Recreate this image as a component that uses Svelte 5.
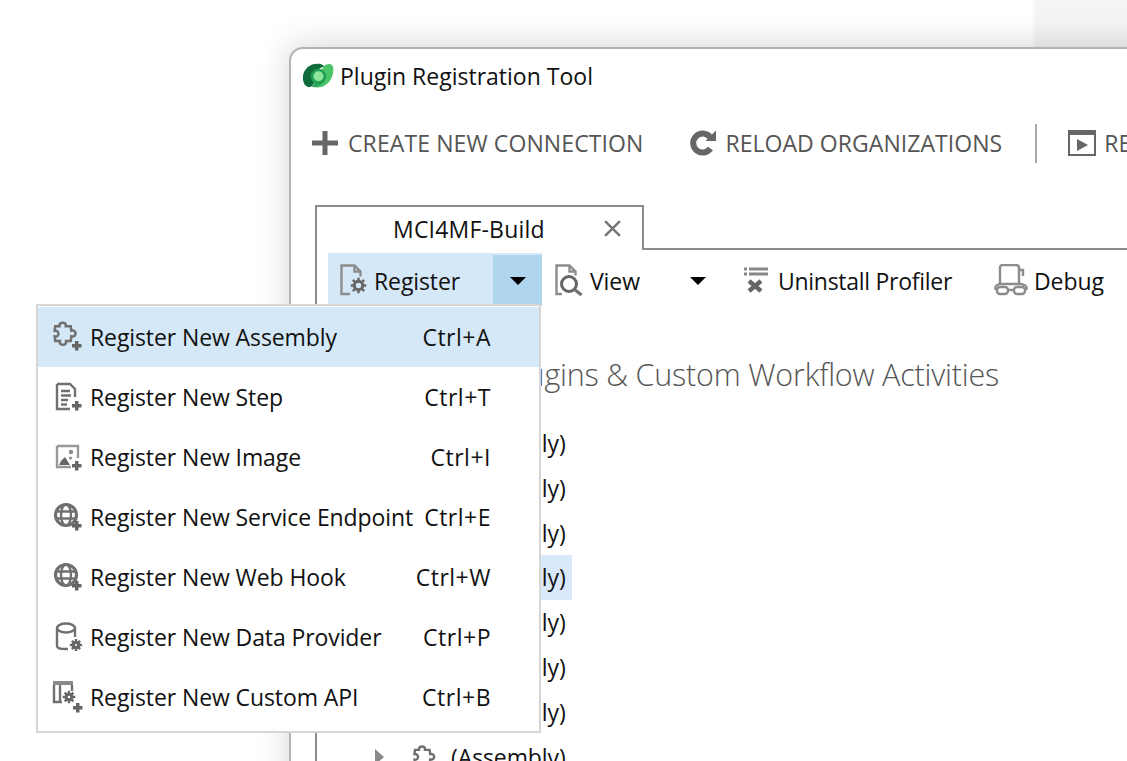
<script>
  const treeRows = [0, 1, 2, 3, 4, 5, 6, 7];

  const menuItems = [
    { label: "Register New Assembly", key: "Ctrl+A", icon: "assembly", active: true },
    { label: "Register New Step", key: "Ctrl+T", icon: "step" },
    { label: "Register New Image", key: "Ctrl+I", icon: "image" },
    { label: "Register New Service Endpoint", key: "Ctrl+E", icon: "globe" },
    { label: "Register New Web Hook", key: "Ctrl+W", icon: "globe" },
    { label: "Register New Data Provider", key: "Ctrl+P", icon: "data" },
    { label: "Register New Custom API", key: "Ctrl+B", icon: "api" }
  ];

  const puzzle = "M11 2.500c2.200 0 3.300 1.200 3 3.400h4.600l.6 4.200c2.400-.6 3.900.6 3.900 2.700s-1.600 3.200-3.900 2.600l-.6 4.400h-4.400c.4 2.400-.8 3.600-2.900 3.600s-3.300-1.300-2.900-3.600H4l-.5-4.200c2.200.4 3.500-.7 3.500-2.600S5.700 9.800 3.500 10.100L4 5.900h4c-.3-2.200.8-3.400 3-3.400z";
</script>

{#snippet plusBadge(x, y)}
  <path class="solid" d="M{x + 3} {y}h3.500v3h3v3.500h-3v3h-3.500v-3h-3v-3.500h3z" />
{/snippet}

{#snippet gear(x, y, r = 3.4)}
  <circle class="ring" cx={x} cy={y} r={r} stroke-width="3" />
  <path class="teeth" d="M{x} {y - r - 3.500}v3M{x} {y + r + .5}v3M{x - r - 3.500} {y}h3M{x + r + .5} {y}h3M{x - r - 1.500} {y - r - 1.500}l2.200 2.200M{x + r + 1.500} {y - r - 1.500}l-2.200 2.200M{x - r - 1.500} {y + r + 1.500}l2.200-2.200M{x + r + 1.500} {y + r + 1.500}l-2.200-2.200" />
{/snippet}

{#snippet menuIcon(name)}
  <svg class="menu-icon" viewBox="0 0 32 32" aria-hidden="true">
    {#if name === "assembly"}
      <path class="line thick" transform="translate(-1 -1) scale(1.06)" d={puzzle} />
      {@render plusBadge(20, 20)}
    {:else if name === "step"}
      <path class="line thick" d="M5 3h13l5 5v8M5 3v25h13" />
      <path class="line thick" d="M9 10h9M9 14.500h10M9 19h7M9 23.500h6" />
      {@render plusBadge(20, 20)}
    {:else if name === "image"}
      <path class="line faint" d="M5 5h21v12M5 5v21h14" />
      <path class="solid" d="M7 24l2-4 4-4 5 8z" />
      <circle class="solid soft" cx="19" cy="11" r="2.200" />
      <circle class="solid soft" cx="18.500" cy="17" r="1.500" />
      {@render plusBadge(20, 20)}
    {:else if name === "globe"}
      <circle class="line heavy" cx="14" cy="14" r="10.500" />
      <ellipse class="line thick" cx="14" cy="14" rx="5" ry="10.500" />
      <path class="line thick" d="M4 10.500h20M4 17.500h20" />
      {@render plusBadge(20, 20)}
    {:else if name === "data"}
      <path class="line thick" d="M5 7v18c0 2 3 3 8 3h3M23 7v9" />
      <ellipse class="line thick" cx="14" cy="7" rx="9" ry="4.500" />
      {@render gear(24, 24, 2.6)}
    {:else}
      <path class="solid soft" d="M1 0h20v4H1z" />
      <path class="line thick" d="M2 4v17h8M8 4v17M20 4v6" />
      {@render gear(17, 16, 2.8)}
      {@render plusBadge(21, 22)}
    {/if}
  </svg>
{/snippet}

<div class="desktop">
  <div class="back-window"></div>

  <section class="window">
    <header class="title">
      <svg class="logo" viewBox="0 0 32 26" aria-hidden="true">
        <path fill="#4cc46a" d="M20 4c2-2.500 6-4 8.500-2.500 2.500 2 2 7 1 11-2 7-9 13-17 12z" />
        <path fill="#2aa757" d="M22 13c0 7-6 12-13 11 2-4 4-6 13-11z" />
        <path fill="#0f6b3a" d="M16 .8C8 0 1 5 0 13c-.5 5 1 10 5 11 3 .7 5-1.500 6-4-2-6 0-13 10-16.500C20 1.800 18 1 16 .8z" />
        <circle cx="15.500" cy="13.500" r="7.800" fill="#20a052" />
        <circle cx="15.500" cy="13.200" r="5" fill="#8fe39a" />
      </svg>
      <span>Plugin Registration Tool</span>
    </header>

    <nav class="commands">
      <button class="command create">
        <svg viewBox="0 0 26 24" aria-hidden="true"><path class="solid" d="M10.500 0h5v9.500H26v5H15.500V24h-5v-9.500H0v-5h10.500z" /></svg>
        <span>CREATE NEW CONNECTION</span>
      </button>
      <button class="command reload">
        <svg viewBox="0 0 28 28" aria-hidden="true">
          <path class="arc" d="M21.500 19.500a9.500 9.500 0 1 1-.5-11.500" />
          <path class="solid" d="M27 1.500V12H16.500z" />
        </svg>
        <span>RELOAD ORGANIZATIONS</span>
      </button>
      <i class="divider"></i>
      <button class="command replay">
        <svg viewBox="0 0 28 26" aria-hidden="true">
          <path class="frame" d="M1 1h26v24H1z" />
          <path class="solid" d="M1 1h26v4H1z" />
          <path class="solid" d="M9 9l11 6-11 6z" />
        </svg>
        <span>REPLAY PLUG-IN EXECUTION</span>
      </button>
    </nav>

    <div class="tabs">
      <div class="tab">
        <span>MCI4MF-Build</span>
        <svg class="close" viewBox="0 0 16 16" aria-hidden="true"><path d="M1 1l14 14M15 1L1 15" /></svg>
      </div>
    </div>

    <div class="tab-body">
      <div class="ribbon">
        <div class="split open">
          <div class="split-main">
            <svg class="rib-icon" viewBox="0 0 30 32" aria-hidden="true">
              <path class="line thick pale" d="M10 30H1.500V1.500h13l6 6v5M14.500 1.500v6h6" />
              {@render gear(18.500, 21.500, 4.2)}
            </svg>
            <span>Register</span>
          </div>
          <div class="split-arrow"><b></b></div>
        </div>
        <div class="split view">
          <div class="split-main">
            <svg class="rib-icon" viewBox="0 0 30 32" aria-hidden="true">
              <path class="line thick pale" d="M7 30H1.500V1.500h13l6 6v4M14.500 1.500v6h6" />
              <circle class="ring" cx="14" cy="20" r="7.500" stroke-width="3" />
              <path class="line heavy" d="M19.500 25.500l7 5.500" />
            </svg>
            <span>View</span>
          </div>
          <div class="split-arrow"><b></b></div>
        </div>
        <button class="rib-btn uninstall">
          <svg viewBox="0 0 26 26" aria-hidden="true">
            <path class="dots" d="M1 2h3M6 2h19M1 7h3M6 7h19" />
            <path class="cross" d="M6 14l12 10M18 14L6 24" />
          </svg>
          <span>Uninstall Profiler</span>
        </button>
        <button class="rib-btn debug">
          <svg viewBox="0 0 34 32" aria-hidden="true">
            <path class="line thick pale" d="M6 20V4c0-2 1-3 3-3h13c2 0 3 1 3 3v16M25 6h4v6" />
            <path class="line thick pale" d="M1.500 22l4-2h22l5 2M1.500 22v4M32.500 22v4" />
            <rect class="line thick pale" x="3" y="23" width="11" height="7" rx="3" />
            <rect class="line thick pale" x="20" y="23" width="11" height="7" rx="3" />
            <path class="line thick pale" d="M14 26h6" />
          </svg>
          <span>Debug</span>
        </button>
      </div>

      <h2>Registered Plugins &amp; Custom Workflow Activities</h2>

      <ul class="tree">
        {#each treeRows as row}
          <li class:selected={row === 3}>
            <b class="caret"></b>
            <svg class="tree-icon" viewBox="0 0 26 26" aria-hidden="true"><path class="line thick" d={puzzle} /></svg>
            <span>(Assembly)</span>
          </li>
        {/each}
      </ul>
    </div>
  </section>

  <div class="menu">
    {#each menuItems as item}
      <div class="menu-row" class:active={item.active}>
        {@render menuIcon(item.icon)}
        <span class="menu-label">{item.label}</span>
        <span class="menu-key">{item.key}</span>
      </div>
    {/each}
  </div>
</div>

<style>
  :global(body) {
    margin: 0;
    background: #fff;
  }

  .desktop {
    position: relative;
    width: 1127px;
    height: 761px;
    overflow: hidden;
    background: #fff;
    font-family: "Open Sans", "Noto Sans", sans-serif;
    color: #111;
  }

  .back-window {
    position: absolute;
    left: 1035px;
    top: -10px;
    width: 200px;
    height: 57px;
    background: #f4f4f4;
    box-shadow: -1px 0 3px rgba(0, 0, 0, 0.05);
  }

  .window {
    position: absolute;
    left: 289px;
    top: 47px;
    width: 900px;
    height: 780px;
    box-sizing: border-box;
    background: #fff;
    border: 2px solid #b4b4b4;
    border-top-left-radius: 14px;
    box-shadow: 0 -2px 32px rgba(0, 0, 0, 0.17);
  }

  .title {
    display: flex;
    align-items: center;
    gap: 5px;
    height: 54px;
    padding-left: 12px;
    font-size: 23px;
  }

  .logo {
    width: 32px;
    height: 26px;
  }

  .commands {
    display: flex;
    align-items: center;
    height: 40px;
    margin-top: 20px;
    padding-left: 21px;
    color: #555;
    font-size: 23px;
    white-space: nowrap;
  }

  button {
    display: flex;
    flex: none;
    align-items: center;
    padding: 0;
    border: 0;
    background: none;
    color: inherit;
    font: inherit;
    letter-spacing: inherit;
  }

  .command {
    gap: 10px;
    letter-spacing: 0.1px;
  }

  .create svg {
    width: 26px;
    height: 24px;
  }

  .reload {
    margin-left: 46px;
    gap: 8px;
    letter-spacing: 0.05px;
  }

  .reload svg {
    width: 28px;
    height: 28px;
  }

  .divider {
    flex: none;
    width: 2px;
    height: 39px;
    margin-left: 33px;
    background: #aaa;
  }

  .replay {
    margin-left: 31px;
    gap: 8px;
  }

  .replay svg {
    width: 28px;
    height: 26px;
  }

  .tabs {
    display: flex;
    height: 45px;
    margin-top: 42px;
    margin-left: 24px;
    border-bottom: 2px solid #8c8c8c;
    box-sizing: border-box;
  }

  .tab {
    display: flex;
    align-items: center;
    box-sizing: border-box;
    width: 329px;
    height: 45px;
    padding-left: 76px;
    background: #fff;
    border: 2px solid #8c8c8c;
    border-bottom: 0;
    font-size: 23px;
    letter-spacing: 0.2px;
  }

  .close {
    width: 17px;
    height: 17px;
    margin-left: 59px;
    stroke: #777;
    stroke-width: 2.400;
    fill: none;
  }

  .tab-body {
    min-height: 600px;
    margin-left: 24px;
    border-left: 2px solid #8c8c8c;
    padding-top: 3px;
  }

  .ribbon {
    display: flex;
    align-items: stretch;
    height: 53px;
    margin-left: 11px;
    font-size: 23px;
    letter-spacing: -0.1px;
    white-space: nowrap;
  }

  .ribbon span {
    padding-top: 3px;
  }

  .split {
    display: flex;
    align-items: stretch;
  }

  .split-main {
    display: flex;
    align-items: center;
  }

  .open {
    width: 214px;
    background: #d5e8f7;
  }

  .open .split-main {
    flex: 1;
    padding-left: 12px;
    gap: 4px;
  }

  .split-arrow {
    display: flex;
    align-items: center;
    justify-content: center;
    width: 49px;
    padding-top: 3px;
  }

  .open .split-arrow {
    background: #b0d5ef;
    margin: 2px 0 0;
    padding-top: 1px;
  }

  .split-arrow b {
    width: 0;
    height: 0;
    border: 8px solid transparent;
    border-top: 8px solid #000;
    border-bottom: 0;
  }

  .view {
    margin-left: 13px;
  }

  .view .split-main {
    gap: 5px;
    width: 130px;
  }

  .view .split-arrow {
    width: 26px;
  }

  .rib-icon {
    width: 30px;
    height: 32px;
  }

  .rib-btn {
    gap: 9px;
  }

  .uninstall {
    margin-left: 32px;
    letter-spacing: -0.28px;
  }

  .uninstall svg {
    width: 26px;
    height: 26px;
  }

  .debug {
    margin-left: 42px;
    gap: 6px;
  }

  .debug svg {
    width: 34px;
    height: 32px;
  }

  h2 {
    margin: 47px 0 0 0;
    padding-left: 34px;
    color: #555;
    font-size: 30.500px;
    font-weight: 300;
    letter-spacing: -0.2px;
    white-space: nowrap;
  }

  .tree {
    list-style: none;
    margin: 26px 0 0;
    padding: 0 0 0 58px;
  }

  .tree li {
    display: flex;
    align-items: center;
    height: 44.800px;
    font-size: 23px;
    letter-spacing: -0.1px;
  }

  .caret {
    width: 0;
    height: 0;
    border-left: 9px solid #8a8a8a;
    border-top: 8px solid transparent;
    border-bottom: 8px solid transparent;
    margin-right: 27px;
  }

  .tree-icon {
    width: 26px;
    height: 26px;
    margin-right: 8px;
  }

  .tree span {
    padding: 0 6px;
    line-height: 44.800px;
  }

  .selected span {
    background: #d9e8fa;
  }

  .menu {
    position: absolute;
    left: 36px;
    top: 304px;
    width: 505px;
    height: 429px;
    box-sizing: border-box;
    padding: 1px 0 0;
    background: #fff;
    border: 2px solid #d6d6d6;
    font-size: 23px;
    letter-spacing: -0.1px;
    white-space: nowrap;
  }

  .menu-row {
    display: flex;
    align-items: center;
    height: 60px;
    padding: 0 48px 0 14px;
  }

  .active {
    background: #d5e8f7;
  }

  .menu-icon {
    flex: none;
    width: 32px;
    height: 32px;
    margin-right: 6px;
  }

  .menu-key {
    margin-left: auto;
    letter-spacing: 0.5px;
  }

  .line {
    fill: none;
    stroke: #707070;
    stroke-width: 1.800;
  }

  .thick {
    stroke-width: 2.400;
  }

  .heavy {
    stroke-width: 3.200;
  }

  .pale {
    stroke: #8c8c8c;
  }

  .faint {
    stroke: #999;
    stroke-width: 2.400;
  }

  .solid {
    fill: #666;
  }

  .soft {
    fill: #8a8a8a;
  }

  .ring {
    fill: none;
    stroke: #666;
  }

  .teeth {
    fill: none;
    stroke: #666;
    stroke-width: 2.400;
  }

  .arc {
    fill: none;
    stroke: #666;
    stroke-width: 6;
  }

  .frame {
    fill: none;
    stroke: #666;
    stroke-width: 2;
  }

  .dots {
    fill: none;
    stroke: #888;
    stroke-width: 2.800;
  }

  .cross {
    fill: none;
    stroke: #666;
    stroke-width: 4.500;
  }
</style>
